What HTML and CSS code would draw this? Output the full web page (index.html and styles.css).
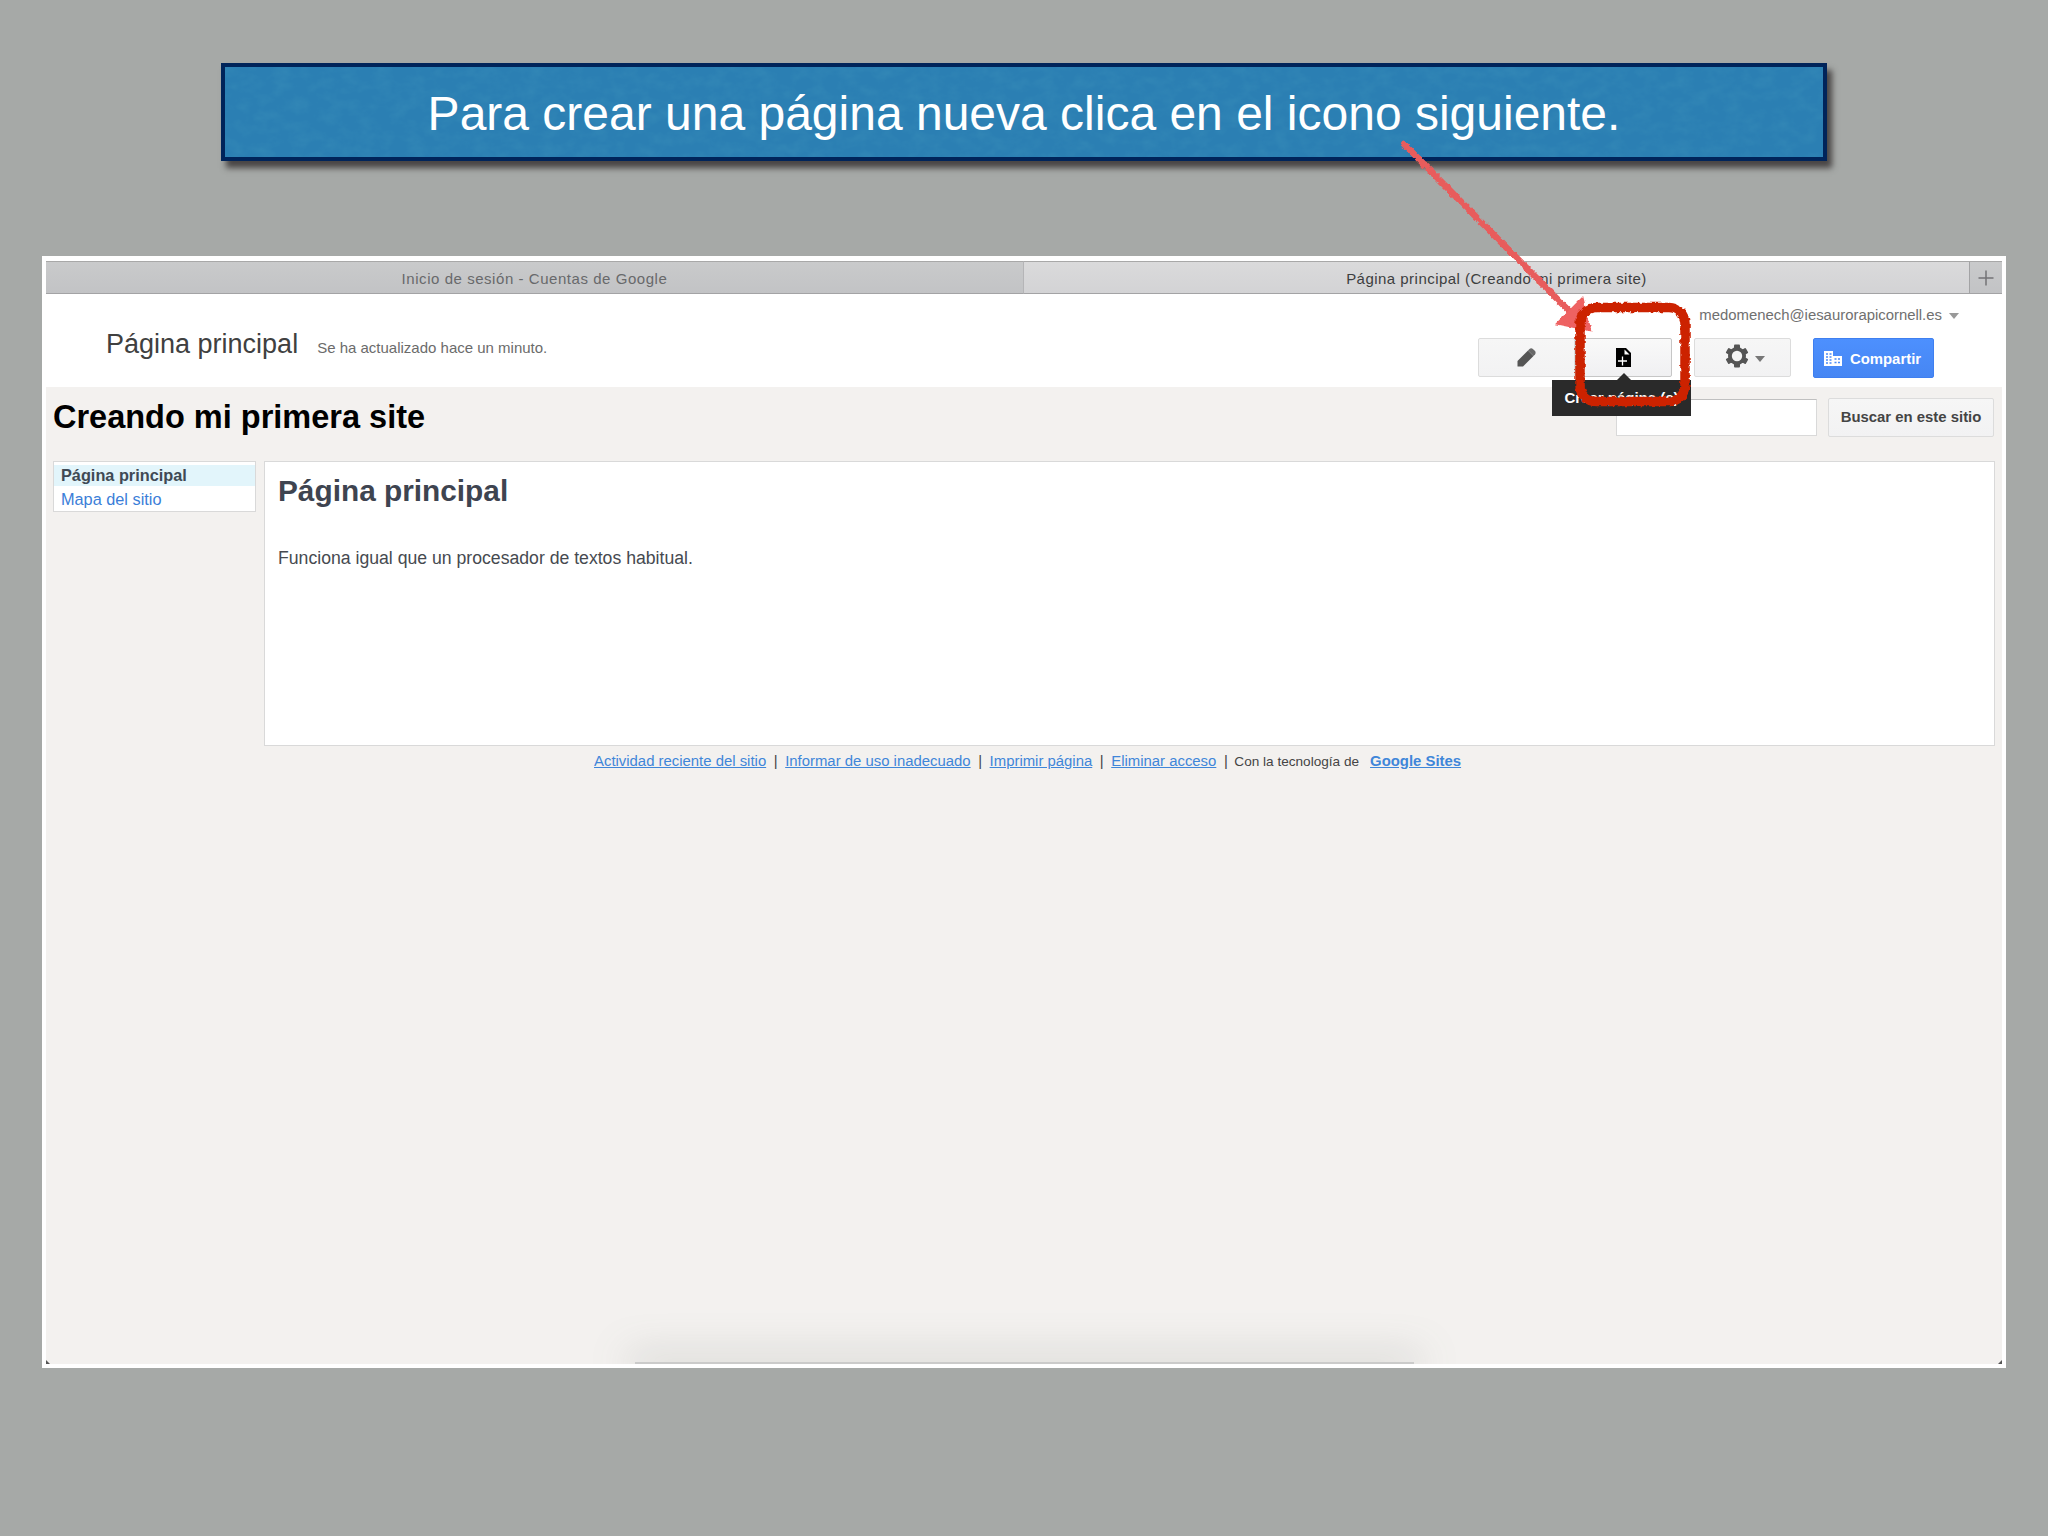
FILE: index.html
```
<!DOCTYPE html>
<html lang="es">
<head>
  <meta charset="UTF-8" />
  <meta name="viewport" content="width=device-width, initial-scale=1.0"/>
  <title>Crear una página nueva</title>
  <link rel="stylesheet" href="styles.css">
</head>
<body>

  <div class="banner">
    <svg class="grain" width="100%" height="100%">
      <filter id="paper" x="0" y="0" width="100%" height="100%">
        <feTurbulence type="fractalNoise" baseFrequency="0.06 0.09" numOctaves="3" seed="4"/>
        <feColorMatrix values="0 0 0 0 0.05  0 0 0 0 0.3  0 0 0 0 0.5  1.6 0 0 0 -0.6"/>
      </filter>
      <rect width="100%" height="100%" filter="url(#paper)"/>
    </svg>
    <span>Para crear una página nueva clica en el icono siguiente.</span>
  </div>

  <div class="window">
    <div class="tabs">
      <div class="tab">Inicio de sesión - Cuentas de Google</div>
      <div class="tab active">Página principal (Creando mi primera site)</div>
      <div class="new-tab">
        <svg width="16" height="16" viewBox="0 0 16 16"><path d="M8 0.5v15M0.5 8h15" stroke="#737376" stroke-width="1.5"/></svg>
      </div>
    </div>

    <header>
      <div class="page-info">
        <span class="page-name">Página principal</span>
        <span class="updated">Se ha actualizado hace un minuto.</span>
      </div>
      <div class="tools">
        <div class="account">medomenech@iesaurorapicornell.es <i class="caret"></i></div>
        <div class="buttons">
          <div class="group">
            <button class="btn" aria-label="Editar">
              <svg width="19" height="19" viewBox="0 0 19 19"><path d="M0.500 13L11 2.500l5.500 5.500L6 18.500H0.500z" fill="#555"/><path d="M11 2.500l1.500-1.500q1.700-1.300 3.400 0l2.100 2.100q1.300 1.700 0 3.400L16.500 8z" fill="#686868"/></svg>
            </button>
            <button class="btn create" aria-label="Crear página">
              <svg width="15" height="19" viewBox="0 0 15 19"><path d="M0 0h10l5 5v14H0z" fill="#000"/><path d="M8.500 1.500v5h5z" fill="#fff"/><path d="M6.500 8.500v9M2 13h9" stroke="#fff" stroke-width="1.300"/></svg>
              <span class="tooltip">Crear página (c)</span>
            </button>
          </div>
          <button class="btn gear" aria-label="Configuración">
            <svg width="24" height="24" viewBox="0 0 24 24"><g fill="#555"><rect x="9" y="0.500" width="6" height="23" rx="1"/><rect x="9" y="0.500" width="6" height="23" rx="1" transform="rotate(60 12 12)"/><rect x="9" y="0.500" width="6" height="23" rx="1" transform="rotate(120 12 12)"/><circle cx="12" cy="12" r="9"/></g><circle cx="12" cy="12" r="5.200" fill="#f5f5f5"/></svg>
            <i class="caret"></i>
          </button>
          <button class="btn share">
            <svg width="18" height="15" viewBox="0 0 18 15"><path d="M0 0h9v5h9v10H0z" fill="#fff"/><path d="M2 3h2M5.500 3h2M2 6h2M5.500 6h2M2 9h2M5.500 9h2M2 12h2M5.500 12h2M10.500 8h2M14 8h2M10.500 11.500h2M14 11.500h2" stroke="#4b8bf8" stroke-width="1.300"/></svg>
            Compartir
          </button>
        </div>
      </div>
    </header>

    <div class="site-bar">
      <h1>Creando mi primera site</h1>
      <div class="search">
        <input type="text">
        <button class="btn">Buscar en este sitio</button>
      </div>
    </div>

    <div class="site">
      <nav>
        <a class="current">Página principal</a>
        <a>Mapa del sitio</a>
      </nav>
      <main>
        <h2>Página principal</h2>
        <p>Funciona igual que un procesador de textos habitual.</p>
      </main>
    </div>

    <footer>
      <a>Actividad reciente del sitio</a><span>|</span><a>Informar de uso inadecuado</a><span>|</span><a>Imprimir página</a><span>|</span><a>Eliminar acceso</a><span>|</span><small>Con la tecnología de</small><a class="brand">Google Sites</a>
    </footer>

    <div class="dock-shadow"></div>
    <i class="corner left"></i>
    <i class="corner right"></i>
  </div>

  <!-- hand-drawn arrow and highlight -->
  <svg class="marks" width="320" height="290" viewBox="1390 130 320 290">
    <filter id="chalk" filterUnits="userSpaceOnUse" x="1390" y="130" width="320" height="290">
      <feTurbulence type="fractalNoise" baseFrequency="0.25" numOctaves="2" seed="7"/>
      <feDisplacementMap in="SourceGraphic" scale="4" xChannelSelector="R" yChannelSelector="G"/>
    </filter>
    <g filter="url(#chalk)">
      <path d="M1404 144L1572 314" stroke="#e85c5c" stroke-width="6.500" stroke-linecap="round" fill="none"/>
      <path d="M1582 300L1559 323L1589 329z" fill="#ee6262" stroke="#ee6262" stroke-width="4"/>
      <rect x="1580" y="307.500" width="105" height="94" rx="16" stroke="#cc2200" stroke-width="9.500" fill="none"/>
    </g>
  </svg>

</body>
</html>
```

FILE: styles.css
```
* {
  box-sizing: border-box;
}

body {
  font-family: "Liberation Sans", Arial, sans-serif;
  background-color: #a6a9a7;
  margin: 0;
  padding: 63px 42px 0;
  width: 2048px;
  height: 1536px;
  overflow: hidden;
  position: relative;
}

.banner {
  position: relative;
  width: 1606px;
  height: 98px;
  margin: 0 auto 95px 179px;
  display: flex;
  align-items: center;
  justify-content: center;
  background-color: #2b7fb3;
  border: 4px solid #00245a;
  box-shadow: 5px 7px 6px rgba(50, 45, 45, 0.8);
  color: white;
  font-size: 48px;
}

.banner span {
  position: relative;
  top: 1px;
}

.grain {
  position: absolute;
  inset: 0;
  opacity: 0.4;
}

.window {
  position: relative;
  width: 1964px;
  height: 1112px;
  background-color: #f3f1ef;
  border: 4px solid white;
  border-top-width: 5px;
}

.tabs {
  display: flex;
  height: 33px;
  font-size: 15px;
  letter-spacing: 0.55px;
  color: #68696b;
}

.tab, .new-tab {
  display: flex;
  align-items: center;
  justify-content: center;
  padding-top: 1px;
  background: linear-gradient(#c9cacb, #c2c3c5);
  border-top: 1px solid #a8a8a8;
  border-bottom: 1px solid #a3a3a5;
}

.tab {
  width: 977px;
}

.tab.active {
  width: 946px;
  background: linear-gradient(#dadadb, #d3d3d5);
  color: #3d3e40;
  letter-spacing: 0.47px;
  border-left: 1px solid #b5b5b7;
}

.new-tab {
  flex: 1;
  border-left: 1px solid #a3a3a5;
}

header {
  display: flex;
  justify-content: space-between;
  height: 93px;
  padding: 0 43px 0 60px;
  background-color: white;
}

.page-info {
  display: flex;
  align-items: baseline;
  gap: 19px;
  padding-top: 35px;
}

.page-name {
  font-size: 27px;
  color: #404040;
}

.updated {
  font-size: 15px;
  color: #6b6b6b;
}

.tools {
  display: flex;
  flex-direction: column;
  width: 481px;
  padding-top: 12px;
}

.account {
  display: flex;
  align-items: center;
  justify-content: flex-end;
  gap: 7px;
  height: 17px;
  margin-bottom: 15px;
  font-size: 14.900px;
  color: #707070;
}

.caret {
  border: 5px solid transparent;
  border-top: 6px solid #777;
  border-bottom: 0;
}

.account .caret {
  border-top-color: #999;
  margin-top: 3px;
}

.buttons, .group {
  display: flex;
}

.btn {
  display: flex;
  align-items: center;
  justify-content: center;
  width: 97px;
  height: 39px;
  padding: 0 0 1px;
  font-family: inherit;
  font-size: 14.900px;
  font-weight: bold;
  color: #444;
  background: linear-gradient(#f6f6f6, #f2f2f3);
  border: 1px solid #dcdcdc;
  border-radius: 2px;
}

.create {
  position: relative;
  border-color: #c6c6c6;
  background: linear-gradient(#f9f9f9, #f0f0f2);
}

.tooltip {
  position: absolute;
  top: 41px;
  left: -24px;
  width: 139px;
  height: 36px;
  line-height: 35px;
  background-color: #2a2a2a;
  color: white;
  font-size: 15px;
  z-index: 1;
}

.tooltip::before {
  content: "";
  position: absolute;
  top: -7px;
  left: 65px;
  border: 7px solid transparent;
  border-top: 0;
  border-bottom-color: #2a2a2a;
}

.gear {
  margin-left: 22px;
  padding: 0 0 3px 5px;
  gap: 6px;
}

.gear .caret {
  margin-top: 5px;
}

.share {
  width: 121px;
  height: 40px;
  margin-left: 22px;
  padding: 1px 2px 0 0;
  gap: 8px;
  color: white;
  background: linear-gradient(#4d90fe, #4686f3);
  border-color: #3f7ff0;
}

.site-bar {
  display: flex;
  justify-content: space-between;
  height: 74px;
  padding: 11px 8px 0 7px;
}

h1 {
  margin: 0;
  font-size: 32.500px;
  line-height: 38px;
  color: black;
}

.search {
  display: flex;
  gap: 11px;
}

.search input {
  width: 201px;
  height: 37px;
  margin-top: 1px;
  border: 1px solid #d9d9d9;
  border-top-color: #c0c0c0;
  background-color: white;
}

.search .btn {
  width: 166px;
  height: 39px;
}

.site {
  display: flex;
  align-items: flex-start;
  gap: 8px;
  padding-left: 7px;
}

nav {
  width: 203px;
  height: 51px;
  padding-top: 3px;
  background-color: white;
  border: 1px solid #d9d9d9;
  font-size: 16.300px;
}

nav a {
  display: block;
  height: 24px;
  padding-left: 7px;
  line-height: 21px;
  color: #3b7ed8;
}

nav a.current {
  height: 21px;
  margin-bottom: 3px;
  line-height: 20px;
  font-weight: bold;
  color: #3f4a55;
  background-color: #e2f5fb;
}

main {
  width: 1731px;
  height: 285px;
  padding: 12px 13px;
  background-color: white;
  border: 1px solid #d9d9d9;
}

h2 {
  margin: 0 0 40px;
  font-size: 29.800px;
  line-height: 34px;
  color: #3e4450;
}

p {
  margin: 0;
  font-size: 17.650px;
  line-height: 20px;
  color: #464a50;
}

footer {
  display: flex;
  align-items: baseline;
  padding: 7px 0 0 548px;
  font-size: 14.900px;
  color: #444;
}

footer a {
  color: #3f86d9;
  text-decoration: underline;
}

footer span {
  width: 19px;
  text-align: center;
}

footer small {
  margin-left: -1px;
  font-size: 13.600px;
}

footer .brand {
  margin-left: 11px;
  font-weight: bold;
}

.dock-shadow {
  position: absolute;
  left: 589px;
  bottom: 0;
  width: 779px;
  height: 2px;
  background-color: #cbcbca;
  box-shadow: 0 0 38px 6px rgba(120, 125, 120, 0.35);
  clip-path: inset(-50px -50px 0 -50px);
}

.corner {
  position: absolute;
  bottom: 0;
  border-bottom: 4px solid #555;
}

.corner.left {
  left: 0;
  border-right: 4px solid transparent;
}

.corner.right {
  right: 0;
  border-left: 4px solid transparent;
}

.marks {
  position: absolute;
  top: 130px;
  left: 1390px;
  z-index: 2;
}
```
